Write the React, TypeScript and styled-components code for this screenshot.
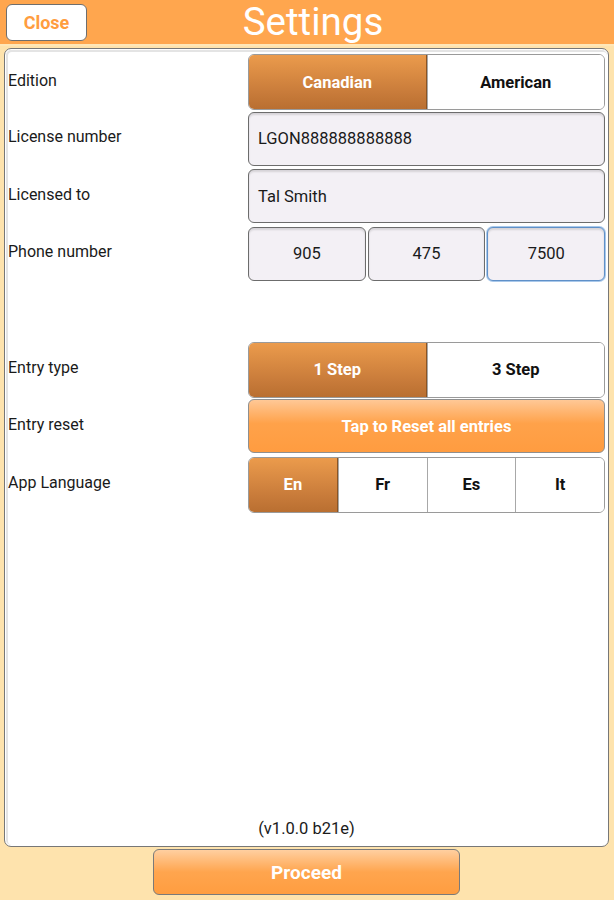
import React from "react";
import styled, { createGlobalStyle, css } from "styled-components";

const GlobalStyle = createGlobalStyle`
    html, body {
        margin: 0;
        padding: 0;
        height: 100%;
    }
    body {
        background: #fee3ad;
        font-family: Roboto, "Liberation Sans", sans-serif;
        color: #1a1a1a;
    }
    #root {
        height: 100%;
    }
`;

const Screen = styled.div`
    height: 900px;
    display: flex;
    flex-direction: column;
    background: #fee3ad;
`;

const Header = styled.header`
    height: 44px;
    flex-shrink: 0;
    background: #ffa64e;
    border-bottom: 2px solid #ffe7b8;
    display: flex;
    align-items: center;
    position: relative;
    padding: 0 6px;
`;

const CloseButton = styled.button`
    width: 81px;
    height: 37px;
    background: #ffffff;
    border: 1px solid #6e6e6e;
    border-radius: 6px;
    color: #ff9d3f;
    font-family: Roboto, "Liberation Sans", sans-serif;
    font-weight: 700;
    font-size: 18px;
    padding: 0;
    cursor: pointer;
    z-index: 1;
`;

const Title = styled.h1`
    position: absolute;
    left: 12px;
    right: 0;
    top: 0;
    margin: 0;
    text-align: center;
    color: #ffffff;
    font-weight: 400;
    font-size: 38.5px;
    line-height: 44px;
`;

const Panel = styled.main`
    flex: 1;
    margin: 2px 5px 2px 4px;
    background: #ffffff;
    border: 1px solid #777777;
    border-radius: 7px;
    box-shadow: inset 0 0 0 1px #ffffff, inset 1px 1px 0 2px #e4e4e4;
    display: flex;
    flex-direction: column;
    padding: 5px 3px 8px 3px;
    gap: 3.5px;
`;

const Row = styled.div`
    height: 54px;
    display: grid;
    grid-template-columns: 240px 1fr;
    align-items: center;
`;

const Spacer = styled.div`
    height: 54px;
`;

const Label = styled.span`
    font-size: 16px;
    padding-bottom: 4px;
`;

const Segmented = styled.div`
    height: 54px;
    display: flex;
    border: 1px solid #9a9a9a;
    border-radius: 6px;
    overflow: hidden;
    background: #ffffff;
`;

const Segment = styled.button<{ $active?: boolean }>`
    flex: 1;
    border: none;
    border-left: 1px solid #a8a8a8;
    padding: 0;
    font-family: Roboto, "Liberation Sans", sans-serif;
    font-weight: 700;
    font-size: 16.5px;
    color: #111111;
    background: #ffffff;

    &:first-child {
        border-left: none;
    }

    ${({ $active }) =>
        $active &&
        css`
            color: #ffffff;
            background: linear-gradient(#eb9b4c, #c87b3a 70%, #b96f31);
            border-right: 1px solid #8a5424;
        `}
`;

const InputBox = styled.div<{ $focused?: boolean; $center?: boolean }>`
    height: 54px;
    box-sizing: border-box;
    flex: 1;
    display: flex;
    align-items: center;
    justify-content: ${({ $center }) => ($center ? "center" : "flex-start")};
    padding: 0 9px;
    background: #f3f0f5;
    border: 1px solid ${({ $focused }) => ($focused ? "#5f90c8" : "#6c6c6c")};
    border-radius: 6px;
    box-shadow: inset 0 2px 2px rgba(0, 0, 0, 0.12)
        ${({ $focused }) => ($focused ? ", 0 0 0 1px #a9c8ea" : "")};
    font-size: 16.5px;
    color: #1a1a1a;
`;

const PhoneGroup = styled.div`
    display: flex;
    gap: 2px;
`;

const ResetButton = styled.button`
    height: 54px;
    border: 1px solid #8f8f8f;
    border-radius: 6px;
    background: linear-gradient(#ffc896, #ffa24a 45%, #ff9c40);
    color: #ffffff;
    font-family: Roboto, "Liberation Sans", sans-serif;
    font-weight: 700;
    font-size: 16.5px;
    padding: 0;
`;

const Version = styled.div`
    margin-top: auto;
    text-align: center;
    font-size: 16.5px;
    color: #1a1a1a;
`;

const Footer = styled.footer`
    height: 51px;
    flex-shrink: 0;
    display: flex;
    justify-content: center;
`;

const ProceedButton = styled.button`
    width: 307px;
    height: 46px;
    margin-right: 1px;
    border: 1px solid #7a7a7a;
    border-radius: 6px;
    background: linear-gradient(#ffcfa0, #ffa54e 50%, #ff9d40);
    color: #ffffff;
    font-family: Roboto, "Liberation Sans", sans-serif;
    font-weight: 700;
    font-size: 19px;
    padding: 0;
`;

const languages = ["En", "Fr", "Es", "It"];

const App: React.FC = () => {
    return (
        <>
            <GlobalStyle />
            <Screen>
                <Header>
                    <CloseButton>Close</CloseButton>
                    <Title>Settings</Title>
                </Header>
                <Panel>
                    <Row>
                        <Label>Edition</Label>
                        <Segmented>
                            <Segment $active>Canadian</Segment>
                            <Segment>American</Segment>
                        </Segmented>
                    </Row>
                    <Row>
                        <Label>License number</Label>
                        <InputBox>LGON888888888888</InputBox>
                    </Row>
                    <Row>
                        <Label>Licensed to</Label>
                        <InputBox>Tal Smith</InputBox>
                    </Row>
                    <Row>
                        <Label>Phone number</Label>
                        <PhoneGroup>
                            <InputBox $center>905</InputBox>
                            <InputBox $center>475</InputBox>
                            <InputBox $center $focused>
                                7500
                            </InputBox>
                        </PhoneGroup>
                    </Row>
                    <Spacer />
                    <Row>
                        <Label>Entry type</Label>
                        <Segmented>
                            <Segment $active>1 Step</Segment>
                            <Segment>3 Step</Segment>
                        </Segmented>
                    </Row>
                    <Row>
                        <Label>Entry reset</Label>
                        <ResetButton>Tap to Reset all entries</ResetButton>
                    </Row>
                    <Row>
                        <Label>App Language</Label>
                        <Segmented>
                            {languages.map((lang, i) => (
                                <Segment key={lang} $active={i === 0}>
                                    {lang}
                                </Segment>
                            ))}
                        </Segmented>
                    </Row>
                    <Version>(v1.0.0 b21e)</Version>
                </Panel>
                <Footer>
                    <ProceedButton>Proceed</ProceedButton>
                </Footer>
            </Screen>
        </>
    );
};

export default App;
